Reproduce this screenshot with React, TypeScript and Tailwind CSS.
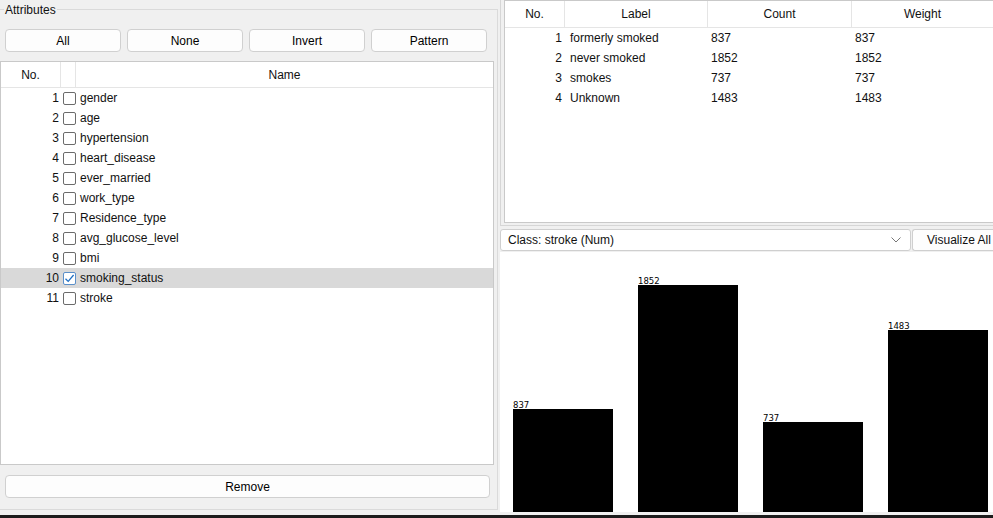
import React from "react";

const attrs = [
  "gender",
  "age",
  "hypertension",
  "heart_disease",
  "ever_married",
  "work_type",
  "Residence_type",
  "avg_glucose_level",
  "bmi",
  "smoking_status",
  "stroke",
];

const labels = [
  { no: 1, label: "formerly smoked", count: 837 },
  { no: 2, label: "never smoked", count: 1852 },
  { no: 3, label: "smokes", count: 737 },
  { no: 4, label: "Unknown", count: 1483 },
];

function Btn({ children, className = "" }: { children: React.ReactNode; className?: string }) {
  return (
    <div
      className={
        "h-[23px] flex items-center justify-center bg-[#fdfdfd] border border-[#d0d0d0] rounded-[4px] text-[#000] " +
        className
      }
    >
      {children}
    </div>
  );
}

function Check({ checked }: { checked?: boolean }) {
  return (
    <div
      className={
        "w-[13px] h-[13px] rounded-[2px] border flex items-center justify-center bg-white " +
        (checked ? "border-[#5b8fc9]" : "border-[#6b6b6b]")
      }
    >
      {checked && (
        <svg width="11" height="11" viewBox="0 0 11 11">
          <path d="M1.5 5.8 L4.2 8.4 L9.6 2" fill="none" stroke="#1f6fc4" strokeWidth="1.3" />
        </svg>
      )}
    </div>
  );
}

export default function App() {
  const maxH = 227;
  const max = 1852;
  return (
    <div
      className="w-[993px] h-[518px] bg-[#f0f0f0] overflow-hidden flex flex-col text-[12px] text-[#111]"
      style={{ fontFamily: '"Liberation Sans", Arial, sans-serif' }}
    >
      <div className="flex h-[515px]">
        {/* Left panel */}
        <div className="w-[500px] shrink-0 pt-[9px] relative">
          <div className="absolute left-[4px] top-[3px] px-[1px] bg-[#f0f0f0] leading-[15px]">Attributes</div>
          <div className="w-[498px] h-[501px] border-t border-r border-b border-[#dadada] flex flex-col">
            <div className="mt-[19px] ml-[5px] w-[482px] grid grid-cols-4 gap-[6px]">
              <Btn>All</Btn>
              <Btn>None</Btn>
              <Btn>Invert</Btn>
              <Btn>Pattern</Btn>
            </div>
            <div className="mt-[9px] w-[494px] h-[404px] border border-[#c9c9c9] bg-white flex flex-col">
              <div className="h-[26px] flex border-b border-[#e5e5e5] shrink-0">
                <div className="w-[60px] border-r border-[#e5e5e5] flex items-center justify-center">No.</div>
                <div className="w-[15px] border-r border-[#e5e5e5]" />
                <div className="flex-1 flex items-center justify-center">Name</div>
              </div>
              {attrs.map((a, i) => (
                <div
                  key={a}
                  className={"h-[20px] flex items-center " + (i === 9 ? "bg-[#d9d9d9]" : "")}
                >
                  <div className="w-[58px] text-right">{i + 1}</div>
                  <div className="ml-[4px]">
                    <Check checked={i === 9} />
                  </div>
                  <div className="ml-[4px]">{a}</div>
                </div>
              ))}
            </div>
            <div className="mt-[10px] ml-[5px] w-[485px]">
              <Btn>Remove</Btn>
            </div>
          </div>
        </div>

        {/* Right panel */}
        <div className="flex-1 flex flex-col">
          <div className="h-[226px] border-l border-b border-[#d6d6d6] pl-[3px] pb-[2px] flex">
            <div className="flex-1 bg-white border-l border-b border-t border-[#c9c9c9] flex flex-col">
              <div className="h-[27px] flex border-b border-[#e5e5e5] shrink-0">
                <div className="w-[60px] border-r border-[#e5e5e5] flex items-center justify-center">No.</div>
                <div className="w-[143px] border-r border-[#e5e5e5] flex items-center justify-center">Label</div>
                <div className="w-[144px] border-r border-[#e5e5e5] flex items-center justify-center">Count</div>
                <div className="flex-1 flex items-center justify-center">Weight</div>
              </div>
              {labels.map((r) => (
                <div key={r.no} className="h-[20px] flex items-center">
                  <div className="w-[57px] text-right">{r.no}</div>
                  <div className="w-[143px] pl-[8px]">{r.label}</div>
                  <div className="w-[144px] pl-[6px]">{r.count}</div>
                  <div className="flex-1 pl-[6px]">{r.count}</div>
                </div>
              ))}
            </div>
          </div>
          <div className="mt-[3px] h-[22px] flex">
            <div className="w-[411px] h-[22px] bg-white border border-[#cfcfcf] rounded-[3px] flex items-center pl-[7px] pr-[8px]">
              <span className="flex-1">Class: stroke (Num)</span>
              <svg width="10" height="6" viewBox="0 0 10 6" className="mr-[1px]">
                <path d="M0.5 0.5 L5 5 L9.5 0.5" fill="none" stroke="#777" strokeWidth="1" />
              </svg>
            </div>
            <div className="ml-[1px] flex-1 h-[22px] bg-[#fdfdfd] border border-[#cfcfcf] rounded-l-[3px] border-r-0 flex items-center pl-[14px]">
              Visualize All
            </div>
          </div>
          <div className="mt-[1px] h-[260px] bg-white flex items-end pl-[13px] gap-[25px]">
            {labels.map((r) => (
              <div key={r.no} className="w-[100px] flex flex-col">
                <div
                  className="text-[8.5px] leading-[8px] h-[8px] text-black"
                  style={{ fontFamily: '"DejaVu Sans", sans-serif' }}
                >
                  {r.count}
                </div>
                <div className="bg-black" style={{ height: Math.round((r.count / max) * maxH) }} />
              </div>
            ))}
          </div>
        </div>
      </div>
      <div className="h-[3px] bg-[#1c1c1c]" />
    </div>
  );
}
